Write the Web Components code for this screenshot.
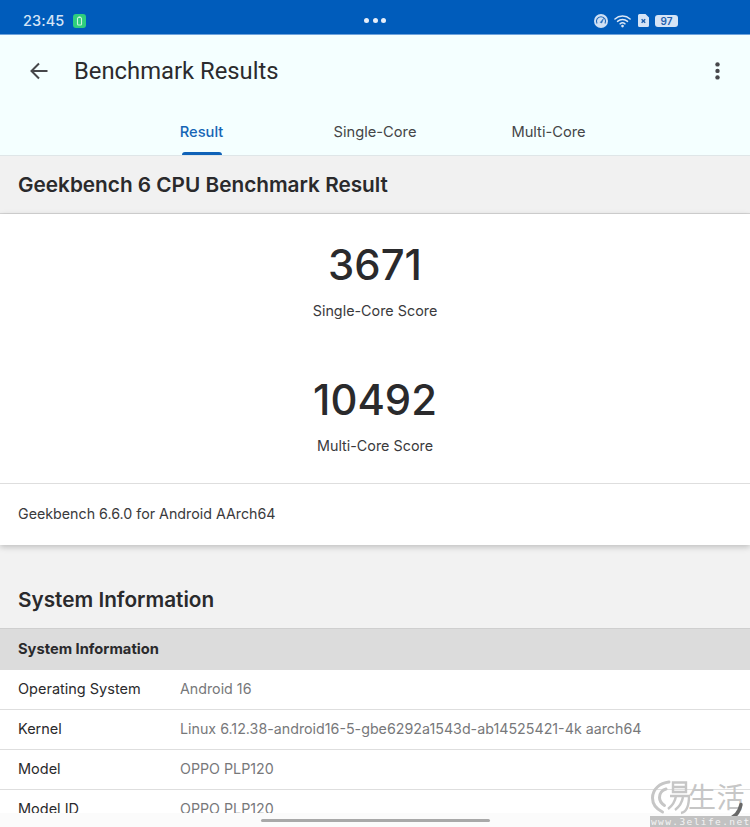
<!DOCTYPE html>
<html>
<head>
<meta charset="utf-8">
<title>Benchmark Results</title>
<style>
  html, body { margin: 0; height: 100%; }
  body { width: 750px; height: 827px; overflow: hidden; position: relative; background: #f2f2f2; font-family: Inter, "Noto Sans", sans-serif; }
  bench-page { height: 827px; }
</style>
</head>
<body>
<bench-page>
  <status-bar></status-bar>
  <app-bar title="Benchmark Results"></app-bar>
  <section-head>Geekbench 6 CPU Benchmark Result</section-head>
  <score-card></score-card>
  <sys-table>
    <info-row name="Operating System" value="Android 16"></info-row>
    <info-row name="Kernel" value="Linux 6.12.38-android16-5-gbe6292a1543d-ab14525421-4k aarch64"></info-row>
    <info-row name="Model" value="OPPO PLP120"></info-row>
    <info-row name="Model ID" value="OPPO PLP120"></info-row>
  </sys-table>
</bench-page>
<nav-handle></nav-handle>
<site-mark></site-mark>

<script>
class BenchPage extends HTMLElement {
  constructor() {
    super();
    this.attachShadow({ mode: "open" });
    this.shadowRoot.innerHTML = `
    <style>
      :host { display: flex; flex-direction: column; overflow: hidden; color: #2a2a2c; }
      ::slotted(*) { flex-shrink: 0; }
    </style>
    <slot></slot>`;
  }
}

class StatusBar extends HTMLElement {
  constructor() {
    super();
    this.attachShadow({ mode: "open" });
    this.shadowRoot.innerHTML = `
    <style>
      :host { display: grid; grid-template-columns: 1fr auto 1fr; align-items: center; box-sizing: border-box; height: 35px; padding: 7px 23px 0; background: #005cbb; border-bottom: 1px solid #6ea3dc; color: #d5e4f6; }
      .left { display: flex; align-items: center; gap: 9px; }
      .time { font: 500 14.5px Inter, sans-serif; letter-spacing: .1px; }
      .dots { display: flex; gap: 3.5px; margin-top: -1px; }
      .dots i { width: 5px; height: 5px; border-radius: 50%; background: #e6eef9; }
      .right { display: flex; align-items: center; justify-content: flex-end; gap: 6px; padding-right: 49px; }
      .batt { width: 23px; height: 12px; background: #d5e4f6; border-radius: 3px; color: #1d5fae; font: 600 10px/12px Inter, sans-serif; text-align: center; }
      svg { display: block; }
    </style>
    <div class="left">
      <span class="time">23:45</span>
      <svg width="13" height="14" viewBox="0 0 13 14"><rect width="13" height="14" rx="3" fill="#2fce7d"/><rect x="4.500" y="3.500" width="4" height="7.500" rx="1" fill="none" stroke="#c8f3da" stroke-width="1.1"/><rect x="5.500" y="2.400" width="2" height="1.200" fill="#c8f3da"/></svg>
    </div>
    <div class="dots"><i></i><i></i><i></i></div>
    <div class="right">
      <svg width="14" height="14" viewBox="0 0 14 14"><circle cx="7" cy="7" r="7" fill="#cfe0f4"/><path d="M3 9.600A4.600 4.600 0 1 1 11 9.600" fill="none" stroke="#1d66b8" stroke-width="1.1"/><path d="M6.200 8.400 9.600 4.400 7.700 9Z" fill="#1d66b8" stroke="#1d66b8" stroke-width=".5"/></svg>
      <svg width="18" height="14" viewBox="0 0 19 14"><g fill="none" stroke="#dbe7f6" stroke-width="1.5" stroke-linecap="round"><path d="M1 4.800C5.400.8 12.600.8 17 4.800"/><path d="M3.700 7.400c3-2.600 7.600-2.600 10.600 0"/><path d="M6.400 10c1.500-1.200 3.700-1.200 5.200 0"/></g><circle cx="9" cy="12.400" r="1.400" fill="#dbe7f6"/></svg>
      <svg width="11" height="13" viewBox="0 0 11 13"><path d="M1.500 0H7.500L11 3.500V11.500A1.500 1.500 0 0 1 9.500 13H1.500A1.500 1.500 0 0 1 0 11.500V1.500A1.500 1.500 0 0 1 1.500 0Z" fill="#d5e4f6"/><path d="M3.600 5.200 7.200 8.800M7.200 5.200 3.600 8.800" stroke="#1d5fae" stroke-width="1.4"/></svg>
      <span class="batt">97</span>
    </div>`;
  }
}

class AppBar extends HTMLElement {
  constructor() {
    super();
    this.attachShadow({ mode: "open" });
    this.shadowRoot.innerHTML = `
    <style>
      :host { display: block; box-sizing: border-box; height: 121px; background: #f4ffff; border-bottom: 1px solid #dfe6e8; }
      .bar { display: flex; align-items: center; height: 72px; padding: 0 30px 0 30px; }
      .bar svg { display: block; }
      h1 { flex: 1; margin: 0 0 0 26px; font: 400 23.8px Roboto, sans-serif; color: #2b2b2d; }
      nav { display: flex; justify-content: center; height: 48px; }
      a { position: relative; display: flex; justify-content: center; padding-top: 16px; width: 173.5px; box-sizing: border-box; font: 400 14.7px/18px Inter, sans-serif; color: #454648; }
      a.on { color: #1565b5; font-weight: 500; }
      a.on::after { content: ""; position: absolute; bottom: 0; width: 40px; height: 3px; border-radius: 3px 3px 0 0; background: #0f62b8; }
    </style>
    <div class="bar">
      <svg width="18" height="18" viewBox="0 0 18 18"><path d="M17.500 9H2M9 1.500 1.500 9 9 16.500" fill="none" stroke="#46474a" stroke-width="2"/></svg>
      <h1>${this.getAttribute("title")}</h1>
      <svg width="5" height="18" viewBox="0 0 5 18"><circle cx="2.500" cy="2.400" r="2.200" fill="#46474a"/><circle cx="2.500" cy="8.900" r="2.200" fill="#46474a"/><circle cx="2.500" cy="15.400" r="2.200" fill="#46474a"/></svg>
    </div>
    <nav>
      <a class="on">Result</a><a>Single-Core</a><a>Multi-Core</a>
    </nav>`;
  }
}

class SectionHead extends HTMLElement {
  constructor() {
    super();
    this.attachShadow({ mode: "open" });
    this.shadowRoot.innerHTML = `
    <style>
      :host { display: flex; align-items: center; height: 57px; padding-left: 18px; background: #f1f1f1; border-bottom: 1px solid #d6d6d6; font: 600 20.75px Inter, sans-serif; color: #2a2a2c; }
    </style>
    <slot></slot>`;
  }
}

class ScoreCard extends HTMLElement {
  constructor() {
    super();
    this.attachShadow({ mode: "open" });
    this.shadowRoot.innerHTML = `
    <style>
      :host { display: block; background: #fff; box-shadow: 0 2px 6px rgba(0,0,0,.22); position: relative; }
      .scores { display: flex; flex-direction: column; align-items: center; border-bottom: 1px solid #dedede; padding-top: 23px; height: 246px; }
      .num { font: 500 41.8px/56px Inter, sans-serif; color: #2a2a2c; }
      .lab { font: 400 14.35px/18px Inter, sans-serif; color: #3a3a3c; margin-top: 9px; margin-bottom: 52px; }
      .foot { height: 61px; box-sizing: border-box; padding: 0 0 2px 18px; display: flex; align-items: center; font: 400 14.25px Inter, sans-serif; color: #3a3a3c; }
    </style>
    <div class="scores">
      <div class="num">3671</div><div class="lab">Single-Core Score</div>
      <div class="num">10492</div><div class="lab">Multi-Core Score</div>
    </div>
    <div class="foot">Geekbench 6.6.0 for Android AArch64</div>`;
  }
}

class SysTable extends HTMLElement {
  constructor() {
    super();
    this.attachShadow({ mode: "open" });
    this.shadowRoot.innerHTML = `
    <style>
      :host { display: block; }
      h2 { margin: 0; height: 83px; padding: 40px 0 0 18px; box-sizing: border-box; font: 600 20.75px/30px Inter, sans-serif; color: #2a2a2c; }
      .head { height: 42px; display: flex; align-items: center; padding: 0 0 2px 18px; box-sizing: border-box; background: #dcdcdc; border-top: 1px solid #cfcfcf; font: 700 14.7px Inter, sans-serif; color: #2a2a2c; }
      .body { background: #fff; }
    </style>
    <h2>System Information</h2>
    <div class="head">System Information</div>
    <div class="body"><slot></slot></div>`;
  }
}

class InfoRow extends HTMLElement {
  constructor() {
    super();
    this.attachShadow({ mode: "open" });
    this.shadowRoot.innerHTML = `
    <style>
      :host { display: grid; grid-template-columns: 162px 1fr; align-items: center; height: 40px; padding: 0 0 2px 18px; box-sizing: border-box; background: #fff; border-bottom: 1px solid #dedede; font: 400 14.5px Inter, sans-serif; color: #2a2a2c; }
      .v { color: #77787a; font-size: 14.25px; }
    </style>
    <span>${this.getAttribute("name")}</span>
    <span class="v">${this.getAttribute("value")}</span>`;
  }
}

class NavHandle extends HTMLElement {
  constructor() {
    super();
    this.attachShadow({ mode: "open" });
    this.shadowRoot.innerHTML = `
    <style>
      :host { position: absolute; left: 0; right: 0; bottom: 0; height: 14px; display: flex; justify-content: center; background: #fbfbfb; }
      i { display: block; width: 229px; height: 3px; margin-top: 6px; border-radius: 2px; background: #a9a9a9; }
    </style>
    <i></i>`;
  }
}

class SiteMark extends HTMLElement {
  constructor() {
    super();
    this.attachShadow({ mode: "open" });
    this.shadowRoot.innerHTML = `
    <style>
      :host { position: absolute; left: 650px; top: 779px; width: 100px; height: 48px; color: #c6c6c6; }
      svg { position: absolute; display: block; }
      .cn { position: absolute; left: 38px; top: -.5px; font: 400 28px/34px "Noto Sans CJK SC", sans-serif; white-space: nowrap; letter-spacing: .5px; }
      .url { position: absolute; left: 0; bottom: 0; width: 100px; height: 11px; background: #c2c2c2; color: #f4f4f4; font: 500 9.500px/11px "DejaVu Sans Mono", monospace; letter-spacing: 1.4px; white-space: nowrap; overflow: hidden; text-align: left; padding-left: 1px; box-sizing: border-box; }
    </style>
    <svg width="48" height="46" viewBox="0 0 48 46" style="left:-2px;top:-2px"><g fill="none" stroke="#c6c6c6" stroke-width="3" stroke-linecap="round"><path d="M21 5C12 6 4.500 12 4.500 21c0 6 4 11 10 14"/><path d="M18 12c-4 1-6.500 4.500-6.500 8.500 0 3 2 6 5 8"/></g><g fill="none" stroke="#c6c6c6" stroke-width="2.400"><path d="M25 5.500H38V15H25ZM25 10H38"/><path d="M22 19H41C41 28 39 35 33 36"/><path d="M28 19C27 25 24 29 20 32M35 20C34 26 31 30 27 33"/></g></svg>
    <span class="cn">生活</span>
    <svg width="24" height="20" viewBox="0 0 24 20" style="left:75px;top:23px"><path d="M2.500 16.500C9 16 14 11 16 2.500" fill="none" stroke="#686868" stroke-width="3.400" stroke-linecap="round"/></svg>
    <div class="url">www.3elife.net</div>`;
  }
}

customElements.define("bench-page", BenchPage);
customElements.define("status-bar", StatusBar);
customElements.define("app-bar", AppBar);
customElements.define("section-head", SectionHead);
customElements.define("score-card", ScoreCard);
customElements.define("sys-table", SysTable);
customElements.define("info-row", InfoRow);
customElements.define("nav-handle", NavHandle);
customElements.define("site-mark", SiteMark);
</script>
</body>
</html>
